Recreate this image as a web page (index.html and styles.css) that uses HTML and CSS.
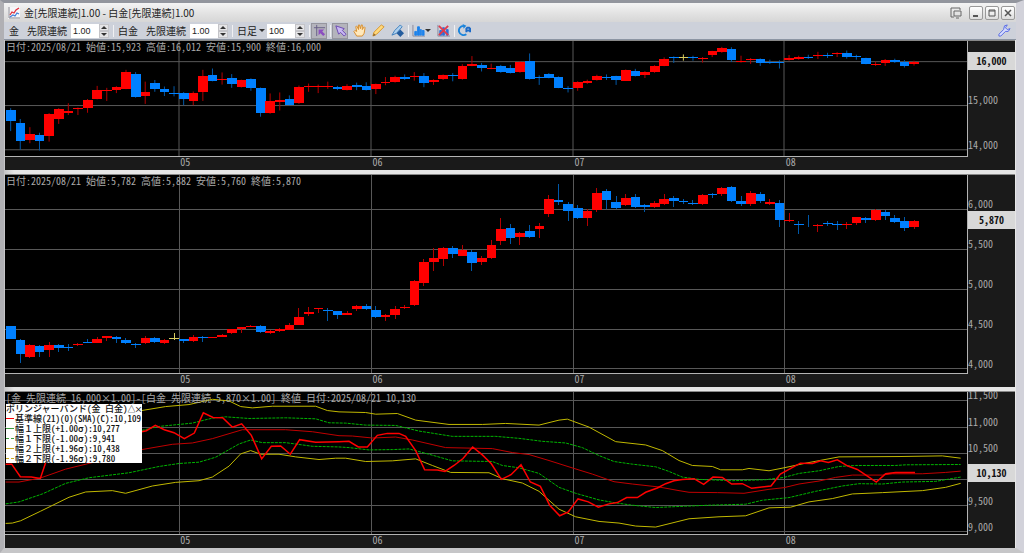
FILE: index.html
```
<!DOCTYPE html>
<html lang="ja">
<head>
  <meta charset="UTF-8" />
  <meta name="viewport" content="width=device-width, initial-scale=1.0"/>
  <title>金[先限連続]1.00 - 白金[先限連続]1.00</title>
  <link rel="stylesheet" href="styles.css">
</head>
<body>
  <div class="window">
    <header class="titlebar">
      <svg class="app-icon" viewBox="0 0 12 12"><rect width="12" height="12" fill="#f6f6f8"/><path d="M1 0v11h11" fill="none" stroke="#8a8a92"/><path d="M2 8l2-3 2 1 2-3 3-2" fill="none" stroke="#e0303c" stroke-width="1.3"/><path d="M2 10l3-2 2 1 2-3 2 1" fill="none" stroke="#3f7fd8" stroke-width="1.2"/></svg>
      <h1>金[先限連続]1.00 - 白金[先限連続]1.00</h1>
      <div class="window-buttons">
        <button class="detach" aria-label="別ウィンドウ"><svg viewBox="0 0 12 12"><path d="M4 10H1V1h9v2M4 4h7v5H4zM6 11h3" fill="none" stroke="#666"/></svg></button>
        <button aria-label="最小化"><svg viewBox="0 0 12 12"><path d="M3 9h5" stroke="#555" stroke-width="2"/></svg></button>
        <button aria-label="最大化"><svg viewBox="0 0 12 12"><path d="M3 3h6v6H3zM3 4h6" fill="none" stroke="#555"/></svg></button>
        <button aria-label="閉じる"><svg viewBox="0 0 12 12"><path d="M3 3l6 6M9 3l-6 6" stroke="#555" stroke-width="1.5"/></svg></button>
      </div>
    </header>

    <div class="toolbar">
      <span class="name">金</span>
      <label for="goldRatio">先限連続</label>
      <span class="spin">
        <input type="text" id="goldRatio" value="1.00">
        <span class="arrows"><button class="up" aria-label="増やす"></button><button class="down" aria-label="減らす"></button></span>
      </span>
      <span class="sep"></span>
      <span class="name">白金</span>
      <label for="platinumRatio">先限連続</label>
      <span class="spin">
        <input type="text" id="platinumRatio" value="1.00">
        <span class="arrows"><button class="up" aria-label="増やす"></button><button class="down" aria-label="減らす"></button></span>
      </span>
      <span class="sep"></span>
      <select id="period" aria-label="足種"><option>日足</option></select>
      <span class="caret"></span>
      <span class="spin">
        <input type="text" id="barCount" aria-label="本数" value="100">
        <span class="arrows"><button class="up" aria-label="増やす"></button><button class="down" aria-label="減らす"></button></span>
      </span>
      <span class="sep"></span>
      <button class="tool on" aria-label="クロスカーソル"><svg viewBox="0 0 14 14"><path d="M4 1v12M1 4h12" stroke="#655d86"/><path d="M6 6h6l-2 2 3 3-2 2-3-3-2 2z" fill="#8c4fc0"/></svg></button>
      <span class="sep"></span>
      <button class="tool on" aria-label="選択"><svg viewBox="0 0 14 14"><path d="M2 2l9 3-2 2 4 4-2 2-4-4-2 2z" fill="#c9b8f4" stroke="#6846b0"/></svg></button>
      <button class="tool" aria-label="手のひら"><svg viewBox="0 0 14 14"><path d="M4 13L1 8l1-1 2 1-1-5 1-1 2 4V1h1l1 4 1-4h1l0 5 2-3 1 1-1 6-2 3z" fill="#ffe9bd" stroke="#d88c28"/></svg></button>
      <button class="tool" aria-label="鉛筆"><svg viewBox="0 0 14 14"><path d="M1 13l1-4 8-8 3 2-8 8z" fill="#ffd97c" stroke="#d5942e"/><path d="M1 13l1-3 2 2z" fill="#8c642c"/></svg></button>
      <button class="tool" aria-label="消去"><svg viewBox="0 0 14 14"><path d="M1 12l3-5 6-6 2 2-6 7z" fill="#aed0ee" stroke="#3b7dbd"/><path d="M10 6l4 4-4 4-4-4z" fill="#245c9e"/></svg></button>
      <span class="sep"></span>
      <button class="tool menu" aria-label="テクニカル"><svg viewBox="0 0 14 14"><path d="M1 1v12h13" fill="none" stroke="#889"/><path d="M3 12V8h2v4zM6 12V3h2v9zM9 12V6h1v6zM11 12V7h2v5z" fill="#1b82ec" stroke="#1b82ec"/></svg><span class="caret"></span></button>
      <button class="tool" aria-label="テクニカル削除"><svg viewBox="0 0 14 14"><path d="M1 1v12h13" fill="none" stroke="#889"/><path d="M3 12V7h2v5zM6 12V4h2v8zM10 12V6h2v6z" fill="#2f71d8" stroke="#2f71d8"/><path d="M2 2l10 10M12 2L2 12" stroke="#e03c4c" stroke-width="2"/></svg></button>
      <span class="sep"></span>
      <button class="tool" aria-label="更新"><svg viewBox="0 0 14 14"><path d="M6 2a5 5 0 1 0 3 9" fill="none" stroke="#1a84dc" stroke-width="2"/><path d="M5 0l4 2-3 3z" fill="#1a84dc"/><path d="M9 9V5l1-1h2l1 1v4M9 7h4" fill="none" stroke="#1a6ac8" stroke-width="2"/></svg></button>
      <button class="tool settings" aria-label="設定"><svg viewBox="0 0 14 14"><path d="M1 13l2 0 5-5h3l2-3-3 1-2-2 2-3-3 1-1 4-5 5z" fill="#d6dcff" stroke="#5468e4"/></svg></button>
    </div>

    <main class="charts">
      <section class="pane" id="gold">
        <div class="plot">
          <svg class="canvas" viewBox="18 12 2886 351" preserveAspectRatio="none"></svg>
          <p class="info">日付:2025/08/21 始値:15,923 高値:16,012 安値:15,900 終値:16,000</p>
        </div>
        <div class="axis"></div>
        <div class="months"></div>
      </section>

      <section class="pane" id="platinum">
        <div class="plot">
          <svg class="canvas" viewBox="18 12 2886 600" preserveAspectRatio="none"></svg>
          <p class="info">日付:2025/08/21 始値:5,782 高値:5,882 安値:5,760 終値:5,870</p>
        </div>
        <div class="axis"></div>
        <div class="months"></div>
      </section>

      <section class="pane" id="spread">
        <div class="plot">
          <svg class="canvas" viewBox="18 18 2886 429" preserveAspectRatio="none"></svg>
          <p class="info">[金 先限連続 16,000×1.00]－[白金 先限連続 5,870×1.00] 終値 日付:2025/08/21 10,130</p>
          <div class="legend">
            <div class="legend-title">ボリンジャーバンド(金 白金)<button aria-label="たたむ">△</button><button aria-label="閉じる">×</button></div>
            <ul>
              <li class="base">基準線(21)(0)(SMA)(C):10,109</li>
              <li class="one"><span class="wide">幅１上限</span>(+1.00<span class="wide">σ</span>):10,277</li>
              <li class="one dash"><span class="wide">幅１下限</span>(-1.00<span class="wide">σ</span>):9,941</li>
              <li class="two"><span class="wide">幅２上限</span>(+1.96<span class="wide">σ</span>):10,438</li>
              <li class="two dash"><span class="wide">幅２下限</span>(-1.96<span class="wide">σ</span>):9,780</li>
            </ul>
          </div>
        </div>
        <div class="axis"></div>
        <div class="months"></div>
      </section>
    </main>
  </div>
  <script src="chart.js"></script>
</body>
</html>
```
FILE: styles.css
```
* {
  box-sizing: border-box;
}
body {
  margin: 0;
  height: 100vh;
  background: #d4d4dc;
  color: #222;
  font-family: "Noto Sans CJK JP", "Liberation Sans", sans-serif;
  font-size: 10px;
  line-height: 12px;
}
button, input, select {
  margin: 0;
  padding: 0;
  border: none;
  background: none;
  color: inherit;
  font: inherit;
}
.window {
  display: flex;
  flex-direction: column;
  height: 100%;
  border-top: 3px solid #92959d;
  border-left: 4px solid #b0b0b4;
  border-right: 8px solid #d2d2da;
  border-bottom: 5px solid #c6c6c8;
}

/* title bar */
.titlebar {
  display: flex;
  align-items: center;
  flex: none;
  height: 19px;
  padding: 0 1px 0 4px;
  background: linear-gradient(#f4f4f4, #e4e4e4 50%, #d6d6d6);
}
.titlebar h1 {
  flex: 1;
  margin: 0 0 0 4px;
  font-size: 10px;
  font-weight: normal;
}
.app-icon {
  width: 12px;
  height: 12px;
}
.window-buttons {
  display: flex;
  align-items: center;
  gap: 2px;
}
.window-buttons button {
  width: 14px;
  height: 14px;
  border: 1px solid #999;
  border-radius: 2px;
  background: linear-gradient(#fff, #ddd);
}
.window-buttons .detach {
  margin-right: 3px;
  border: none;
  background: none;
}
.window-buttons svg {
  display: block;
  width: 12px;
  height: 12px;
}

/* toolbar */
.toolbar {
  display: flex;
  align-items: center;
  flex: none;
  height: 18px;
  padding: 0 5px;
  background: #cdd1da;
  border-bottom: 1px solid #8c95a3;
}
.toolbar label {
  margin: 0 4px 0 8px;
}
.spin {
  display: flex;
  width: 38px;
  height: 14px;
  background: #fff;
}
.spin input {
  flex: 1;
  min-width: 0;
  padding-left: 2px;
  font-family: "Liberation Sans", sans-serif;
  font-size: 9px;
}
.arrows {
  display: flex;
  flex-direction: column;
  width: 10px;
  background: #e4e4e6;
}
.arrows button {
  flex: 1;
  display: flex;
  align-items: center;
  justify-content: center;
  border: 1px solid #c4c4c8;
}
.arrows button::after, .caret {
  content: "";
  border-left: 3px solid transparent;
  border-right: 3px solid transparent;
  border-top: 3px solid #333;
}
.arrows .up::after {
  border-top: none;
  border-bottom: 3px solid #333;
}
.sep {
  width: 1px;
  height: 12px;
  margin: 0 4px;
  background: #f0f0f2;
}
#period {
  width: 20px;
  appearance: none;
}
#period + .caret {
  margin: 0 2px;
}
.tool {
  display: flex;
  align-items: center;
  justify-content: center;
  width: 14px;
  height: 14px;
  margin-right: 5px;
}
.tool:has(+ .sep) {
  margin-right: 0;
}
.sep + .tool {
  margin-left: -2px;
}
.tool svg {
  flex: none;
  width: 13px;
  height: 13px;
}
.tool.on {
  background: #b4b4bc;
  outline: 1px solid #96969e;
}
.tool.menu {
  width: 20px;
}
.tool.settings {
  margin: 0 0 0 auto;
}

/* charts */
.charts {
  flex: 1;
  min-height: 0;
  display: grid;
  grid-template-rows: 130fr 213fr 157fr;
  row-gap: 4px;
  padding: 0 1px;
  background: linear-gradient(90deg, #c4c4c6, #e6e6e6 1%);
}
.pane {
  display: grid;
  grid-template-columns: 1fr 47px;
  grid-template-rows: 1fr 13px;
  min-height: 0;
  background: #1a1a1a;
  border-top: 1px solid #888;
  color: #aaa;
  font-feature-settings: "hwid";
}
.plot {
  position: relative;
  min-height: 0;
  background: #000;
  border-right: 1px solid #b4b4b4;
  border-bottom: 1px solid #b4b4b4;
}
.canvas {
  position: absolute;
  width: 100%;
  height: 100%;
}
.info {
  position: relative;
  margin: 0 0 0 1px;
  white-space: nowrap;
}
.axis, .months {
  position: relative;
}
.axis span, .months span {
  position: absolute;
}
.axis span {
  margin-top: -12px;
}
.axis .now {
  width: 100%;
  margin-top: -1px;
  transform: translateY(-50%);
  background: #d8d8d8;
  color: #111;
  font-weight: bold;
  line-height: 18px;
  text-align: center;
}
.months span {
  margin-top: -1px;
  padding-left: 1px;
}

/* svg parts */
.canvas * {
  vector-effect: non-scaling-stroke;
}
.grid {
  stroke: #585858;
  shape-rendering: crispEdges;
}
.wick, .body {
  shape-rendering: crispEdges;
}
.wick.r { stroke: #b40000; }
.wick.b { stroke: #0058a8; }
.wick.y { stroke: #d8cc60; }
.body.r { fill: #f00; }
.body.b { fill: #0080ff; }
.body.y { fill: #d8cc60; }
.line {
  fill: none;
  stroke-width: 1;
}
.line.close {
  stroke: #f00;
  stroke-width: 1.5;
}
.line.sma { stroke: #c00000; }
.line.green {
  stroke: #00b400;
  stroke-dasharray: 3 1;
}
.line.yellow { stroke: #c0b800; }

/* legend */
.legend {
  position: absolute;
  top: 12px;
  left: 1px;
  width: 136px;
  background: #fff;
  color: #111;
  font-size: 9px;
  font-weight: 500;
  line-height: 9px;
  white-space: nowrap;
}
.legend-title {
  display: flex;
  height: 9px;
}
.legend-title button {
  width: 7px;
  font-size: 8px;
  line-height: 9px;
}
.legend ul {
  margin: 0;
  padding: 0;
  list-style: none;
}
.legend li {
  display: flex;
  align-items: center;
  height: 10px;
}
.legend li::before {
  content: "";
  width: 8px;
  margin-right: 1px;
  border-top: 1px solid;
}
.legend .wide {
  font-feature-settings: "fwid";
}
.legend .base::before { border-color: #f00; }
.legend .one::before { border-color: #3c9c3c; }
.legend .two::before { border-color: #c8a820; }
.legend .dash::before { border-top-style: dashed; }
```
FILE: chart.js
```
// month separators, x in chart units
const months = [[540, "05"], [1116, "06"], [1722, "07"], [2355, "08"]];

// colour, high, body top, body bottom, low
const gold = `b 217 222 255 287,b 250 261 317 344,r 275 297 315 324,b 292 300 317 346,r 232 234 303 319,
r 217 220 250 265,r 202 227 232 238,r 215 216 218 238,r 189 192 216 231,r 149 163 189 190,r 155 162 164 195,
r 150 153 162 171,r 100 106 157 159,b 107 112 183 185,r 136 167 179 204,b 131 139 160 167,b 151 160 168 180,
b 150 170 172 181,b 168 170 190 208,r 166 170 196 208,r 100 120 167 195,b 96 117 133 135,r 108 127 129 145,
b 113 125 143 155,r 130 132 153 154,b 126 129 154 164,b 154 156 231 243,r 172 196 231 234,r 169 191 197 224,
b 178 189 207 209,r 148 153 202 204,r 142 148 152 167,r 145 148 151 171,r 136 148 150 158,b 149 151 157 162,
r 144 150 161 163,b 139 147 151 162,b 138 148 161 163,r 142 144 160 174,r 122 137 140 147,r 118 122 136 139,
b 114 123 128 131,r 107 118 121 133,b 110 120 140 153,r 129 132 138 146,r 114 117 129 131,b 110 115 118 135,
r 83 88 129 130,r 58 81 87 89,b 79 84 94 105,r 81 93 95 98,b 85 88 107 109,b 85 95 109 111,r 74 76 107 109,
b 50 72 129 130,b 117 121 123 146,b 110 112 124 126,b 120 122 155 156,b 150 156 159 169,r 135 137 155 164,
r 130 134 140 143,r 115 120 131 133,b 114 121 123 131,b 118 120 132 146,r 99 101 133 134,b 97 103 118 120,
r 104 106 117 125,r 86 88 107 109,r 62 67 87 89,b 59 62 65 79,y 53 62 64 72,b 57 60 65 72,r 61 63 67 78,
r 42 44 54 61,r 30 34 46 48,b 31 36 71 76,r 57 74 76 78,r 64 67 71 82,b 65 67 78 88,b 69 75 77 82,
b 71 76 78 96,r 55 63 71 72,r 57 61 67 69,b 54 60 62 67,r 45 54 58 67,b 48 55 57 64,r 46 48 52 61,
b 41 48 60 66,b 54 57 62 69,b 63 65 81 83,r 75 81 86 88,r 67 70 78 88,b 66 69 75 79,b 70 76 88 93,r 72 75 82 87`;

const platinum = `b 469 471 510 510,b 510 513 555 581,r 525 526 562 567,b 526 530 549 564,r 519 527 542 562,
b 524 527 537 547,b 525 534 536 545,r 522 523 525 531,b 510 519 521 522,r 502 508 521 522,r 499 501 506 514,
b 501 503 509 520,b 507 511 520 524,b 520 523 525 536,r 501 507 521 523,b 503 505 518 520,r 508 513 521 524,
y 492 505 507 513,b 508 510 514 521,r 498 502 514 518,b 499 502 504 519,r 502 503 505 507,r 493 496 502 504,
r 478 480 490 493,r 472 474 480 490,r 468 469 471 474,b 467 469 488 490,r 481 486 492 494,r 475 479 485 488,
r 461 467 481 483,r 414 442 466 467,r 412 427 432 438,r 414 415 418 430,b 416 420 423 455,b 423 424 437 447,
r 425 429 435 437,r 405 408 418 425,b 404 410 417 420,b 410 420 442 446,r 432 436 441 454,r 408 417 435 449,
r 406 411 413 418,r 330 332 407 409,r 268 277 338 347,r 233 264 277 302,r 230 232 268 288,b 226 232 250 262,
r 225 239 256 258,b 238 246 280 302,r 256 264 277 285,r 209 224 263 267,r 142 177 213 225,b 161 174 204 221,
r 186 188 199 225,b 163 181 201 202,r 156 168 177 204,r 72 86 129 140,b 39 88 94 104,b 94 99 120 150,
b 104 112 142 144,r 115 122 142 168,r 51 67 118 124,b 54 61 87 116,b 75 95 113 115,r 70 81 103 107,
b 69 78 110 112,b 99 104 110 125,r 90 97 108 112,r 70 86 101 102,b 77 83 91 108,b 85 92 95 101,b 87 96 100 104,
r 70 73 99 102,b 66 69 71 83,r 49 52 70 76,b 46 49 91 93,b 76 90 101 107,r 60 66 99 107,b 62 71 91 98,
r 86 95 101 102,b 88 97 149 171,r 128 147 151 154,b 150 161 163 192,b 132 162 165 171,r 160 162 167 185,
b 152 157 159 168,b 152 159 161 178,r 153 159 161 176,r 138 140 158 164,b 138 141 149 158,r 114 117 147 152,
b 119 124 136 149,b 134 141 153 156,b 139 151 172 182,r 147 150 171 175`;

const spread = [
  ["yellow", "428,74 500,62 570,56 640,40 690,45 725,62 760,66 820,61 950,61 985,74 1020,78 1100,80 1130,85 1195,83 1250,103 1350,116 1450,116 1520,113 1620,118 1680,103 1705,100 1770,124 1850,168 1940,178 1990,195 2040,225 2080,240 2140,243 2165,253 2230,253 2250,249 2310,256 2355,247 2420,233 2520,214 2700,213 2830,211 2885,218"],
  ["yellow", "20,415 40,414 65,407 125,378 210,336 260,320 340,316 380,324 460,302 530,291 600,286 640,275 690,242 725,205 755,195 785,206 840,206 890,214 960,222 1010,218 1040,218 1100,228 1180,226 1250,220 1300,240 1355,261 1470,262 1510,280 1570,293 1620,318 1680,372 1730,395 1800,409 1860,414 1910,423 1970,426 2010,416 2070,401 2160,395 2240,392 2310,368 2375,366 2430,350 2500,340 2560,326 2650,322 2770,316 2840,306 2885,294"],
  ["green", "428,134 480,122 580,112 640,97 680,93 750,98 860,96 950,99 990,111 1040,112 1100,118 1190,119 1260,136 1360,152 1490,152 1560,158 1630,167 1700,172 1750,186 1800,210 1845,228 1900,236 1970,244 2010,258 2050,275 2100,282 2200,286 2300,283 2355,276 2400,264 2460,256 2520,243 2570,240 2690,240 2720,238 2885,237"],
  ["green", "20,356 60,350 130,326 200,294 270,277 390,262 480,243 540,234 600,230 650,215 720,175 755,163 790,171 860,171 940,182 1020,184 1050,186 1110,193 1180,192 1230,190 1290,206 1360,226 1480,228 1510,240 1560,247 1620,264 1680,306 1730,324 1800,344 1850,353 1900,360 1970,367 2060,363 2130,360 2240,357 2290,345 2370,337 2450,318 2530,302 2580,295 2650,296 2710,290 2810,288 2885,275"],
  ["sma", "20,290 60,290 124,278 200,251 285,230 428,192 520,176 580,172 640,159 730,132 860,132 940,138 1020,150 1060,151 1120,157 1190,154 1240,163 1340,186 1480,189 1540,201 1590,207 1650,225 1722,248 1780,266 1845,289 1900,296 1980,305 2040,316 2070,321 2155,322 2235,324 2310,312 2355,307 2400,296 2460,287 2510,276 2560,269 2650,269 2680,265 2770,265 2840,261 2885,257"],
  ["close", "20,236 38,236 64,274 97,275 124,279 142,225 428,138 442,135 469,119 496,132 525,141 556,159 586,142 613,81 642,95 671,96 700,124 728,114 757,149 788,220 817,182 845,181 874,206 902,162 950,170 1020,168 1050,167 1078,184 1105,184 1135,149 1165,143 1200,143 1220,152 1250,195 1277,253 1315,254 1338,258 1365,240 1392,219 1421,184 1450,208 1477,235 1507,282 1536,268 1566,238 1594,290 1624,303 1652,360 1682,392 1708,380 1737,341 1768,350 1798,366 1830,356 1855,352 1883,337 1915,337 1940,321 1975,308 2000,295 2025,286 2050,282 2085,280 2114,297 2142,275 2170,276 2198,296 2230,295 2258,309 2316,302 2344,266 2404,233 2440,234 2465,226 2488,231 2515,223 2545,241 2575,252 2632,290 2660,265 2690,261 2748,261"]
];

function add(svg, tag, attrs) {
  const el = document.createElementNS("http://www.w3.org/2000/svg", tag);
  for (const key in attrs) el.setAttribute(key, attrs[key]);
  svg.appendChild(el);
}

function drawPane(id, ticks, now) {
  const pane = document.getElementById(id);
  const svg = pane.querySelector(".canvas");
  const axis = pane.querySelector(".axis");
  const box = svg.viewBox.baseVal;
  const top = y => (y - box.y) / box.height * 100 + "%";

  ticks.forEach(([y, label]) => {
    add(svg, "line", { class: "grid", x1: 18, x2: 2904, y1: y, y2: y });
    if (label) axis.innerHTML += `<span style="top:${top(y)}">${label}</span>`;
  });
  axis.innerHTML += `<span class="now" style="top:${top(now[0])}">${now[1]}</span>`;

  months.forEach(([x, label]) => {
    add(svg, "line", { class: "grid", x1: x, x2: x, y1: 0, y2: 700 });
    pane.querySelector(".months").innerHTML += `<span style="left:${(x - box.x) / box.width * 100}%">${label}</span>`;
  });
  return svg;
}

function drawCandles(svg, data) {
  data.split(",").forEach((row, i) => {
    const [color, high, t, b, low] = row.trim().split(" ");
    const x = 35 + i * 28.83;
    add(svg, "line", { class: "wick " + color, x1: x, x2: x, y1: high, y2: low });
    add(svg, "rect", { class: "body " + color, x: x - 14, y: t, width: 29, height: Math.max(b - t, 3) });
  });
}

drawCandles(drawPane("gold", [[75, ""], [209, "15,000"], [344, "14,000"]], [75, "16,000"]), gold);
drawCandles(drawPane("platinum", [[117, "6,000"], [239, "5,500"], [358, "5,000"], [479, "4,500"], [599, "4,000"]], [151, "5,870"]), platinum);

const spreadSvg = drawPane("spread", [[44, "11,500"], [125, "11,000"], [205, "10,500"], [283, ""], [362, "9,500"], [440, "9,000"]], [264, "10,130"]);
spread.forEach(([name, points]) => add(spreadSvg, "polyline", { class: "line " + name, points }));
```
